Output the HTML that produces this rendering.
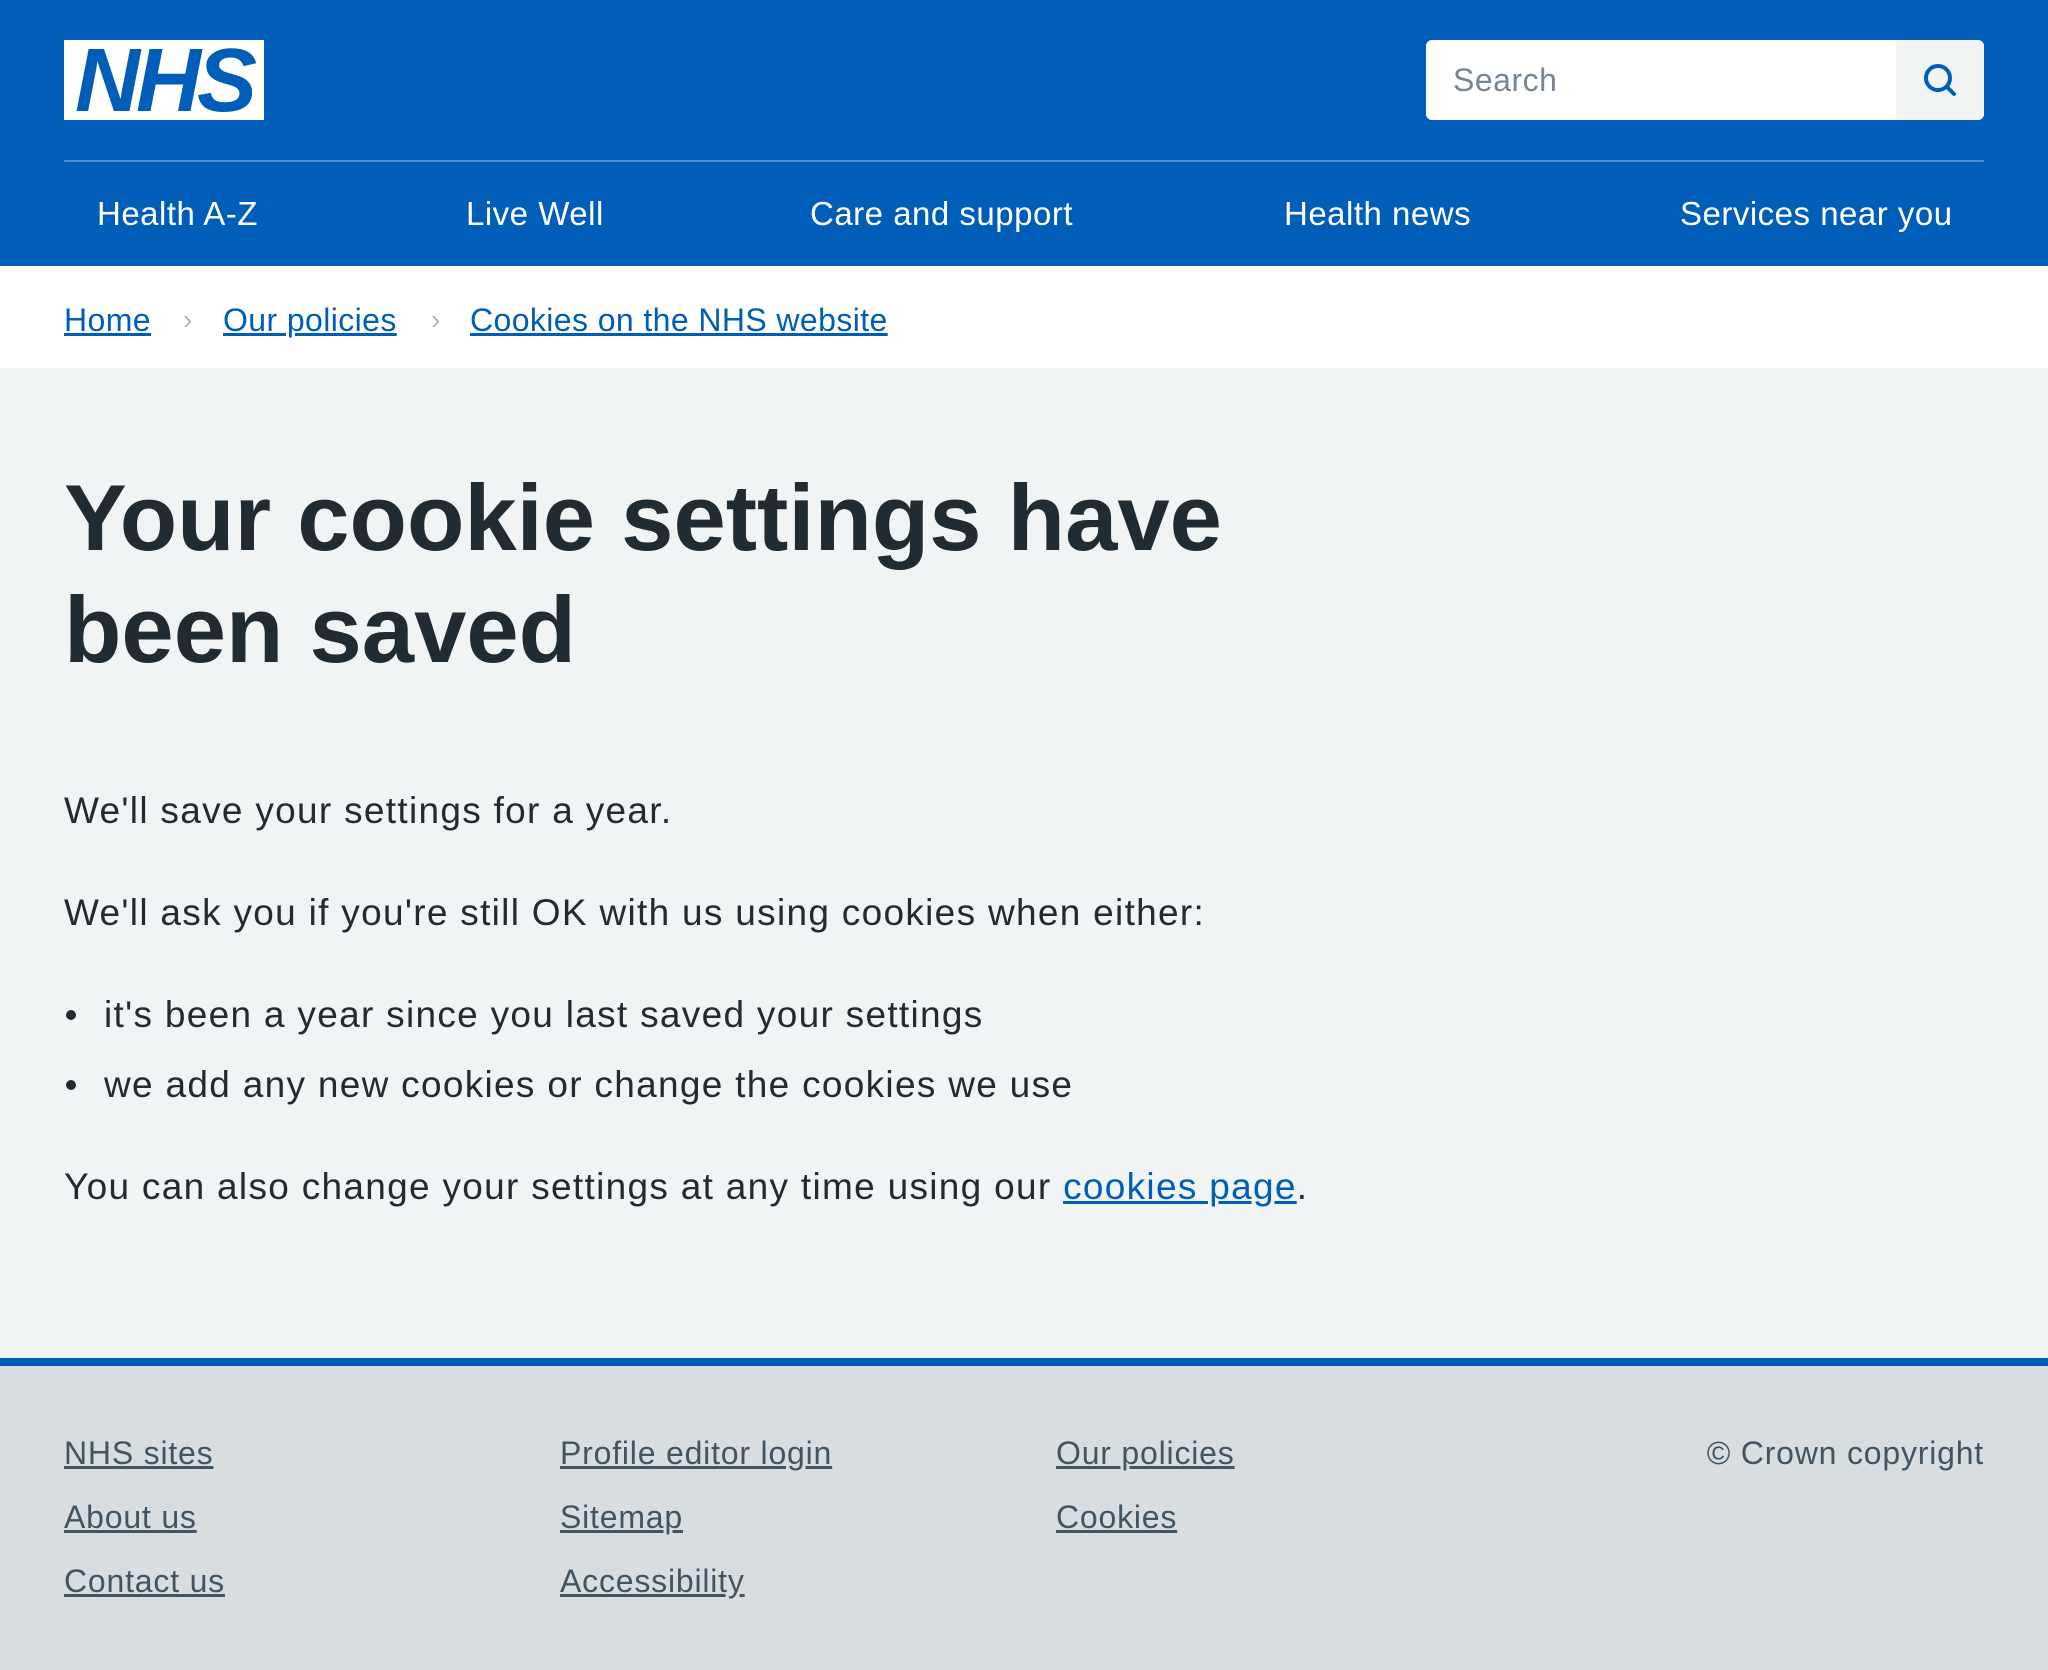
<!DOCTYPE html>
<html><head><meta charset="utf-8"><style>
*{margin:0;padding:0;box-sizing:border-box}
body{width:2048px;height:1670px;font-family:"Liberation Sans",sans-serif;background:#f0f4f5;color:#212b32;position:relative;overflow:hidden}
.hdr{position:absolute;left:0;top:0;width:2048px;height:266px;background:#005eb8}
.logo{position:absolute;left:64px;top:40px;width:200px;height:80px;background:#fff;color:#005eb8;font-weight:bold;font-style:italic;font-size:90px;line-height:82px;text-align:center;letter-spacing:-4px;overflow:hidden}
.search{position:absolute;left:1426px;top:40px;width:558px;height:80px;background:#fff;border-radius:6px;overflow:hidden}
.search span{position:absolute;left:27px;top:0;line-height:80px;font-size:32px;color:#768692;letter-spacing:0.5px}
.search .btn{position:absolute;right:0;top:0;width:88px;height:80px;background:#f0f4f5}
.line{position:absolute;left:64px;top:160px;width:1920px;height:2px;background:#4c8ed0}
.nav{position:absolute;top:190px;font-size:33px;color:#fff;line-height:48px;letter-spacing:0.5px}
.bc{position:absolute;top:300px;font-size:32px;color:#005eb8;text-decoration:underline;line-height:40px;letter-spacing:0.4px}
.chev{position:absolute;top:300px;font-size:28px;color:#aeb7bd;line-height:40px}
.white{position:absolute;left:0;top:266px;width:2048px;height:102px;background:#fff}
h1{position:absolute;left:64px;top:462px;font-size:94px;line-height:112px;font-weight:bold;letter-spacing:0}
.p{position:absolute;left:64px;font-size:37px;line-height:48px;letter-spacing:1.3px}
.dot{position:absolute;left:66px;width:10px;height:10px;border-radius:50%;background:#212b32}
a{color:#005eb8}
.foot{position:absolute;left:0;top:1358px;width:2048px;height:312px;background:#d8dde0;border-top:8px solid #005eb8}
.fl{position:absolute;font-size:32px;color:#425563;text-decoration:underline;line-height:40px;letter-spacing:0.8px}
</style></head><body>
<div class="hdr">
 <div class="logo">NHS</div>
 <div class="search"><span>Search</span><div class="btn">
  <svg width="88" height="80" viewBox="0 0 88 80"><circle cx="42" cy="38" r="12" fill="none" stroke="#005eb8" stroke-width="4"/><line x1="51" y1="47" x2="58" y2="54" stroke="#005eb8" stroke-width="4" stroke-linecap="round"/></svg>
 </div></div>
 <div class="line"></div>
 <div class="nav" style="left:97px">Health A-Z</div>
 <div class="nav" style="left:466px">Live Well</div>
 <div class="nav" style="left:810px">Care and support</div>
 <div class="nav" style="left:1284px">Health news</div>
 <div class="nav" style="left:1680px">Services near you</div>
</div>
<div class="white"></div>
<div class="bc" style="left:64px">Home</div>
<div class="chev" style="left:183px">›</div>
<div class="bc" style="left:223px">Our policies</div>
<div class="chev" style="left:431px">›</div>
<div class="bc" style="left:470px">Cookies on the NHS website</div>
<h1>Your cookie settings have<br>been saved</h1>
<div class="p" style="top:787px">We'll save your settings for a year.</div>
<div class="p" style="top:889px">We'll ask you if you're still OK with us using cookies when either:</div>
<div class="dot" style="top:1010px"></div>
<div class="p" style="top:991px;left:104px">it's been a year since you last saved your settings</div>
<div class="dot" style="top:1080px"></div>
<div class="p" style="top:1061px;left:104px">we add any new cookies or change the cookies we use</div>
<div class="p" style="top:1163px">You can also change your settings at any time using our <a href="#">cookies page</a>.</div>
<div class="foot"></div>
<div class="fl" style="left:64px;top:1433px">NHS sites</div>
<div class="fl" style="left:64px;top:1497px">About us</div>
<div class="fl" style="left:64px;top:1561px">Contact us</div>
<div class="fl" style="left:560px;top:1433px">Profile editor login</div>
<div class="fl" style="left:560px;top:1497px">Sitemap</div>
<div class="fl" style="left:560px;top:1561px">Accessibility</div>
<div class="fl" style="left:1056px;top:1433px">Our policies</div>
<div class="fl" style="left:1056px;top:1497px">Cookies</div>
<div class="fl" style="right:64px;top:1433px;text-decoration:none">© Crown copyright</div>
</body></html>
